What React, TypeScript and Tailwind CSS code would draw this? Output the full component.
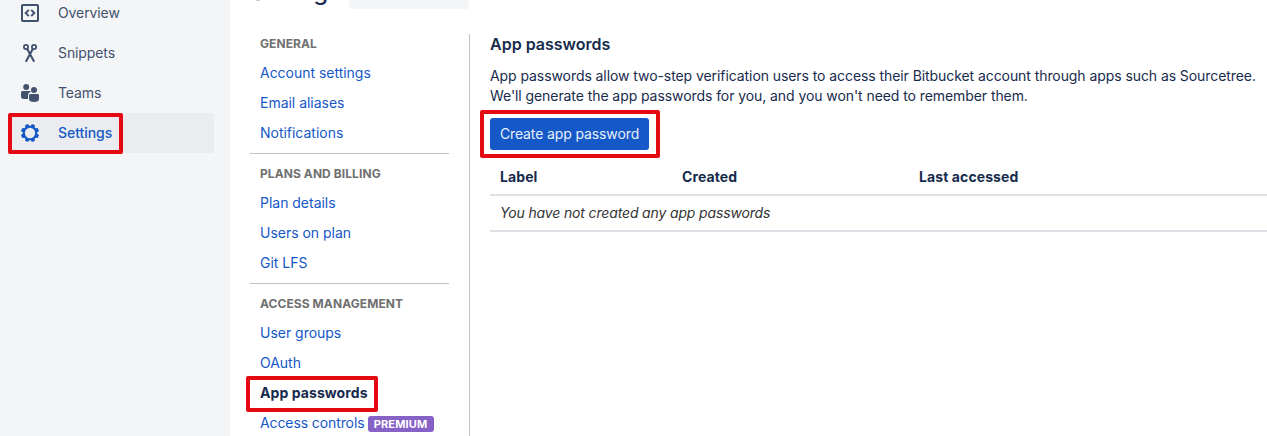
import type { ReactNode } from "react";

function OverviewIcon() {
  return (
    <svg width="20" height="20" viewBox="0 0 20 20" fill="none" stroke="#42526e">
      <rect x="2" y="2" width="16" height="16" rx="0.8" strokeWidth="2" />
      <path d="M8.8 6.900 5.700 10l3.100 3.100M11.200 6.900l3.100 3.100-3.100 3.100" strokeWidth="2" />
    </svg>
  );
}

function SnippetsIcon() {
  return (
    <svg width="20" height="20" viewBox="0 0 20 20" fill="none" stroke="#42526e">
      <circle cx="6" cy="4" r="2.100" strokeWidth="1.800" />
      <circle cx="14" cy="4" r="2.100" strokeWidth="1.800" />
      <path d="M7.200 6l7 12.700M12.800 6l-7 12.700" strokeWidth="2.100" />
    </svg>
  );
}

function TeamsIcon() {
  return (
    <svg width="20" height="20" viewBox="0 0 20 20" fill="#42526e">
      <circle cx="6.2" cy="4" r="3" />
      <path d="M1 9.6Q1 8 2.6 8h7.2q1 0 1 1-2.8.6-2.8 3.4V16H4q-3 0-3-2.5z" />
      <circle cx="14" cy="7" r="3" />
      <path d="M9 12.4Q9 11 10.500 11h7q1.500 0 1.500 1.400v3.300Q19 19 14 19t-5-3.300z" />
    </svg>
  );
}

function SettingsIcon() {
  const teeth = [22.5, 67.5, 112.5, 157.5, 202.5, 247.5, 292.5, 337.5];
  return (
    <svg width="20" height="20" viewBox="0 0 20 20" className="fill-[#1558c7]">
      <circle cx="10" cy="10" r="6.2" fill="none" stroke="#1558c7" strokeWidth="2.1" />
      {teeth.map((angle) => (
        <path key={angle} d="M7.700 4l.5-2.500q.2-.6.700-.6h2.200q.5 0 .7.6l.5 2.500z" transform={`rotate(${angle} 10 10)`} />
      ))}
    </svg>
  );
}

function SideItem({ icon, label, selected = false }: { icon: ReactNode; label: string; selected?: boolean }) {
  return (
    <div
      className={
        selected
          ? "flex h-10 items-center gap-[18px] rounded-[3px] bg-[#ebecf0] pl-3 text-[#1558c7]"
          : "flex h-10 items-center gap-[18px] pl-3 text-[#42526e]"
      }
    >
      {icon}
      <span className={selected ? "pb-0.5 font-medium tracking-[-0.05px]" : "pb-0.5 tracking-[-0.1px]"}>{label}</span>
    </div>
  );
}

function NavSection({ title, children }: { title: string; children: ReactNode }) {
  return (
    <section className="border-b border-[#c1c1c1] px-2.5 pt-[5px] pb-[5px]">
      <h3 className="h-[29px] text-[12px] leading-[30px] font-bold tracking-[0.08px] text-[#707070]">{title}</h3>
      {children}
    </section>
  );
}

function NavLink({ children }: { children: ReactNode }) {
  return <a className="flex h-[30px] items-center pb-0.5 tracking-[-0.02px] text-[#1558c7]">{children}</a>;
}

export default function App() {
  return (
    <div className="relative flex h-[436px] w-[1267px] overflow-hidden bg-white font-['Inter',sans-serif] text-[14px] whitespace-nowrap text-[#172b4d]">
      <aside className="w-[230px] shrink-0 bg-[#f4f5f7] pr-4 pl-2">
        <nav className="-mt-[7px]">
          <SideItem icon={<OverviewIcon />} label="Overview" />
          <SideItem icon={<SnippetsIcon />} label="Snippets" />
          <SideItem icon={<TeamsIcon />} label="Teams" />
          <SideItem icon={<SettingsIcon />} label="Settings" selected />
        </nav>
      </aside>

      <main className="flex min-w-0 flex-1 flex-col pl-5">
        <header className="-mt-[23px] flex h-[57px] shrink-0 items-start">
          <h1 className="w-[99px] text-[24px] leading-[30px] font-medium tracking-[-0.4px]">Settings</h1>
          <div className="h-8 w-[120px] rounded-[3px] bg-[#f4f5f7]" />
        </header>

        <div className="flex min-h-0 flex-1">
          <div className="w-[220px] shrink-0 border-r border-[#c1c1c1] pr-5">
            <div className="-mt-2.5">
              <NavSection title="GENERAL">
                <NavLink>Account settings</NavLink>
                <NavLink>Email aliases</NavLink>
                <NavLink>Notifications</NavLink>
              </NavSection>
              <NavSection title="PLANS AND BILLING">
                <NavLink>Plan details</NavLink>
                <NavLink>Users on plan</NavLink>
                <NavLink>Git LFS</NavLink>
              </NavSection>
              <NavSection title="ACCESS MANAGEMENT">
                <NavLink>User groups</NavLink>
                <NavLink>OAuth</NavLink>
                <a className="flex h-[30px] items-center pb-0.5 font-bold tracking-[0.08px] text-[#172b4d]">App passwords</a>
                <NavLink>
                  <span className="tracking-[-0.1px]">Access controls</span>
                  <span className="mt-1 ml-[3px] flex h-4 w-[66px] items-center justify-center rounded-[3px] bg-[#8662c7] text-[11px] font-bold tracking-[0.12px] text-white">
                    PREMIUM
                  </span>
                </NavLink>
              </NavSection>
            </div>
          </div>

          <section className="min-w-0 flex-1 pl-5">
            <h2 className="h-5 text-[16px] leading-5 font-semibold">App passwords</h2>
            <p className="mt-3 leading-5 tracking-[-0.075px]">
              App passwords allow two-step verification users to access their Bitbucket account through apps such as Sourcetree.
              <br />
              We'll generate the app passwords for you, and you won't need to remember them.
            </p>
            <button className="mt-3 block h-8 w-[159px] rounded-[3px] bg-[#1558c7] pb-0.5 text-center tracking-[-0.12px] text-[#e9f0fb]">
              Create app password
            </button>
            <table className="mt-[9px] w-full table-fixed border-collapse text-left">
              <colgroup>
                <col className="w-[182px]" />
                <col className="w-[237px]" />
                <col />
              </colgroup>
              <thead>
                <tr className="h-9 border-b-2 border-[#dfe1e6]">
                  <th className="px-2.5 font-bold tracking-[0.1px]">Label</th>
                  <th className="px-2.5 font-bold tracking-[0.1px]">Created</th>
                  <th className="px-2.5 font-bold tracking-[0.1px]">Last accessed</th>
                </tr>
              </thead>
              <tbody>
                <tr className="h-9 border-b-2 border-[#dfe1e6]">
                  <td colSpan={3} className="px-2.5 pb-0.5 tracking-[-0.15px] text-[#333333] italic">You have not created any app passwords</td>
                </tr>
              </tbody>
            </table>
          </section>
        </div>
      </main>

      <div className="absolute top-[113px] left-2 h-[41px] w-[115px] rounded-[2px] border-4 border-[#e50914]" />
      <div className="absolute top-[376px] left-[246px] h-9 w-[132px] rounded-[2px] border-4 border-[#e50914]" />
      <div className="absolute top-[110px] left-[480px] h-12 w-[180px] rounded-[2px] border-4 border-[#e50914]" />
    </div>
  );
}
